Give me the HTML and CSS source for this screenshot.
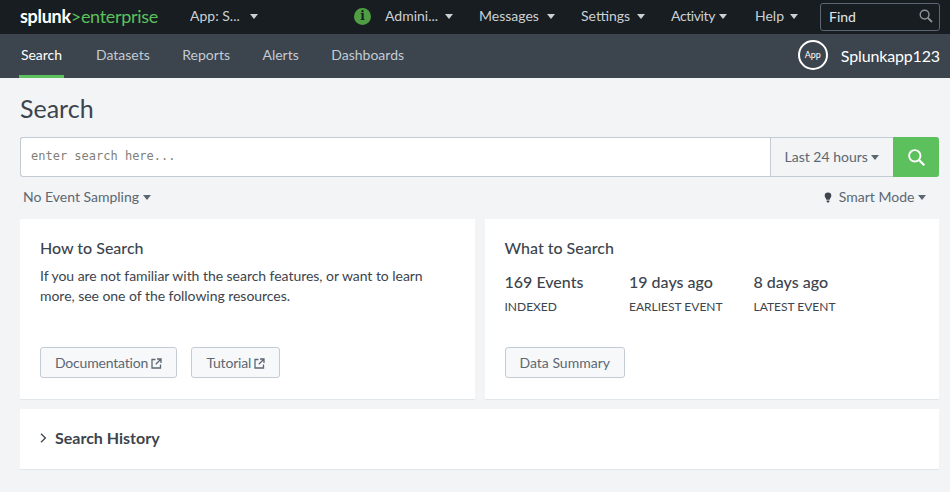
FILE: index.html
```html
<!DOCTYPE html>
<html lang="en">
<head>
    <meta charset="UTF-8">
    <title>Search | Splunk</title>
    <link rel="stylesheet" href="styles.css">
</head>
<body>
    <header class="topbar">
        <div class="logo"><span class="logo-splunk">splunk</span><span class="logo-gt">&gt;</span><span class="logo-ent">enterprise</span></div>
        <a class="top-item app-menu">App: S... <i class="caret"></i></a>
        <span class="info-badge">i</span>
        <a class="top-item admin">Admini... <i class="caret"></i></a>
        <a class="top-item messages">Messages <i class="caret"></i></a>
        <a class="top-item settings">Settings <i class="caret"></i></a>
        <a class="top-item activity">Activity <i class="caret"></i></a>
        <a class="top-item help">Help <i class="caret"></i></a>
        <div class="find">
            <span>Find</span>
            <svg class="find-icon" viewBox="0 0 14 14" width="14" height="14"><circle cx="5.6" cy="5.6" r="4.4" fill="none" stroke="#8b949c" stroke-width="1.4"/><path d="M9 9l4 4" stroke="#8b949c" stroke-width="1.8"/></svg>
        </div>
    </header>

    <nav class="appbar">
        <a class="tab active">Search</a>
        <a class="tab">Datasets</a>
        <a class="tab">Reports</a>
        <a class="tab">Alerts</a>
        <a class="tab">Dashboards</a>
        <div class="app-name">
            <span class="app-icon">App</span>
            <span class="app-label">Splunkapp123</span>
        </div>
    </nav>

    <main class="page">
        <h1>Search</h1>

        <div class="searchbar">
            <div class="search-input">enter search here...</div>
            <div class="time-range">Last 24 hours <i class="caret"></i></div>
            <div class="search-btn">
                <svg viewBox="0 0 20 20" width="19" height="19"><circle cx="8.2" cy="8.2" r="6" fill="none" stroke="#fff" stroke-width="2"/><path d="M12.6 12.6l5.6 5.6" stroke="#fff" stroke-width="2.4"/></svg>
            </div>
        </div>

        <div class="options">
            <span>No Event Sampling <i class="caret"></i></span>
            <span class="mode">
                <svg viewBox="0 0 8 11" width="8" height="11"><path d="M4 .5a3.3 3.3 0 0 1 3.3 3.3c0 1.5-1.3 2.4-1.6 3.9H2.3C2 6.2.7 5.3.7 3.8A3.3 3.3 0 0 1 4 .5zM2.6 8.5h2.8v1.1l-.7.9H3.3l-.7-.9z" fill="#3c444d"/></svg>
                Smart Mode <i class="caret"></i>
            </span>
        </div>

        <div class="panels">
            <section class="panel">
                <h3>How to Search</h3>
                <p>If you are not familiar with the search features, or want to learn more, see one of the following resources.</p>
                <div class="buttons">
                    <a class="btn btn-ext">Documentation
                        <svg class="ext" viewBox="0 0 11 11" width="11" height="11"><path d="M4.5 1.5H1V10h8.5V6.5M6 1h4v4M10 1L4.8 6.2" fill="none" stroke="#5c6773" stroke-width="1.3"/></svg>
                    </a>
                    <a class="btn btn-ext">Tutorial
                        <svg class="ext" viewBox="0 0 11 11" width="11" height="11"><path d="M4.5 1.5H1V10h8.5V6.5M6 1h4v4M10 1L4.8 6.2" fill="none" stroke="#5c6773" stroke-width="1.3"/></svg>
                    </a>
                </div>
            </section>
            <section class="panel">
                <h3>What to Search</h3>
                <div class="stats">
                    <div class="stat">
                        <div class="stat-value">169 Events</div>
                        <div class="stat-label">INDEXED</div>
                    </div>
                    <div class="stat">
                        <div class="stat-value">19 days ago</div>
                        <div class="stat-label">EARLIEST EVENT</div>
                    </div>
                    <div class="stat">
                        <div class="stat-value">8 days ago</div>
                        <div class="stat-label">LATEST EVENT</div>
                    </div>
                </div>
                <div class="buttons">
                    <a class="btn">Data Summary</a>
                </div>
            </section>
        </div>

        <section class="history">
            <svg viewBox="0 0 7 10" width="7" height="10"><path d="M1 .8L5.4 5 1 9.2" fill="none" stroke="#3c444d" stroke-width="1.3"/></svg>
            <span>Search History</span>
        </section>
    </main>
</body>
</html>
```

FILE: styles.css
```css
* {
    box-sizing: border-box;
}
html, body {
    height: 100%;
}
body {
    margin: 0;
    font-family: Lato, "Open Sans", Arial, sans-serif;
    font-size: 14px;
    color: #3c444d;
    background-color: #f2f4f5;
    overflow: hidden;
}
.caret {
    display: inline-block;
    width: 0;
    height: 0;
    border-left: 4px solid transparent;
    border-right: 4px solid transparent;
    border-top: 5px solid currentColor;
    vertical-align: 2px;
}

/* top black bar */
.topbar {
    display: flex;
    align-items: center;
    height: 34px;
    padding-left: 20px;
    background-color: #171d21;
    color: #ccd0d4;
}
.logo {
    width: 170px;
    margin-bottom: 2px;
    font-size: 18px;
    letter-spacing: -0.3px;
    white-space: nowrap;
}
.logo-splunk {
    color: #fff;
    font-weight: 700;
}
.logo-gt, .logo-ent {
    color: #5cc05c;
}
.top-item {
    margin-bottom: 3px;
    white-space: nowrap;
}
.top-item .caret {
    margin-left: 3px;
}
.app-menu {
    width: 164px;
}
.top-item.app-menu .caret {
    margin-left: 7px;
}
.info-badge {
    width: 17px;
    height: 17px;
    margin: 0 14px 2px 0;
    border-radius: 50%;
    background-color: #4f9e43;
    color: #171d21;
    font: bold 12px/17px "DejaVu Serif", serif;
    text-align: center;
}
.admin {
    width: 94px;
}
.messages {
    width: 102px;
}
.top-item.messages .caret {
    margin-left: 5px;
}
.settings {
    width: 90px;
}
.activity {
    width: 84px;
    letter-spacing: -0.4px;
}
.top-item.activity .caret {
    margin-left: 1px;
}
.help {
    width: 65px;
}
.top-item.help .caret {
    margin-left: 2px;
}
.find {
    display: flex;
    align-items: center;
    justify-content: space-between;
    width: 120px;
    height: 28px;
    padding: 0 6px 2px 8px;
    border: 1px solid #5c6773;
    border-radius: 3px;
    color: #e1e6eb;
}

/* app bar */
.appbar {
    display: flex;
    align-items: stretch;
    height: 44px;
    padding-left: 19px;
    background-color: #3c444d;
    color: #c3cbd4;
}
.tab {
    display: flex;
    align-items: center;
    justify-content: center;
    margin-right: 30.5px;
    border-bottom: 3px solid transparent;
    padding: 0 1px;
}
.tab.active {
    width: 45px;
    margin-right: 31px;
    border-bottom-color: #5cc05c;
    color: #fff;
}
.app-name {
    display: flex;
    align-items: center;
    gap: 13px;
    margin-left: auto;
    padding: 0 10px 2px 0;
    color: #fff;
}
.app-icon {
    width: 30px;
    height: 30px;
    border: 2px solid #fff;
    border-radius: 50%;
    font-size: 9px;
    line-height: 26px;
    text-align: center;
}
.app-label {
    font-size: 16px;
    letter-spacing: -0.15px;
}

/* page */
.page {
    padding: 0 11px 0 20px;
}
h1 {
    margin: 0;
    padding-top: 16px;
    height: 59px;
    font-size: 25px;
    font-weight: 400;
    line-height: 29px;
}
.searchbar {
    display: flex;
    height: 40px;
    border: 1px solid #c3cbd4;
    border-right: 0;
    border-radius: 3px;
    background-color: #fff;
}
.search-input {
    flex: 1;
    padding-left: 10px;
    font: 12px/37px "DejaVu Sans Mono", monospace;
    color: #817f7a;
}
.time-range {
    width: 123px;
    border-left: 1px solid #c3cbd4;
    background-color: #f2f4f5;
    line-height: 37px;
    text-align: center;
    color: #5c6773;
}
.search-btn {
    display: flex;
    align-items: center;
    justify-content: center;
    width: 46px;
    margin: -1px 0;
    border-radius: 0 3px 3px 0;
    background-color: #5cc05c;
}
.options {
    display: flex;
    justify-content: space-between;
    height: 42px;
    padding: 11px 13px 0 3px;
    color: #5c6773;
}
.mode svg {
    margin-right: 3px;
    vertical-align: -1px;
}
.panels {
    display: flex;
    gap: 10px;
}
.panel {
    display: flex;
    flex-direction: column;
    flex: 1;
    height: 181px;
    padding: 19px 20px 20px;
    background-color: #fff;
    border-bottom: 1px solid #e1e6eb;
}
h3 {
    margin: 0;
    font-size: 16px;
    font-weight: 500;
    line-height: 20px;
}
.panel p {
    margin: 8px 0 0;
    line-height: 20px;
    letter-spacing: -0.04px;
}
.buttons {
    display: flex;
    gap: 14px;
    margin-top: auto;
    margin-bottom: 1px;
}
.btn {
    height: 31px;
    padding: 0 14px;
    border: 1px solid #c3cbd4;
    border-radius: 3px;
    background-color: #f7f8fa;
    color: #5c6773;
    line-height: 29px;
}
.btn-ext {
    letter-spacing: -0.2px;
}
.ext {
    vertical-align: -1px;
}
.stats {
    display: flex;
    margin-top: 14px;
}
.stat {
    width: 124.5px;
}
.stat-value {
    font-size: 16px;
    font-weight: 500;
    line-height: 20px;
}
.stat-label {
    margin-top: 7px;
    font-size: 12px;
    line-height: 16px;
}
.history {
    display: flex;
    align-items: center;
    gap: 8px;
    height: 61px;
    margin-top: 9px;
    padding: 0 0 3px 20px;
    background-color: #fff;
    border-bottom: 1px solid #e1e6eb;
    font-size: 16px;
    font-weight: 700;
}
```
